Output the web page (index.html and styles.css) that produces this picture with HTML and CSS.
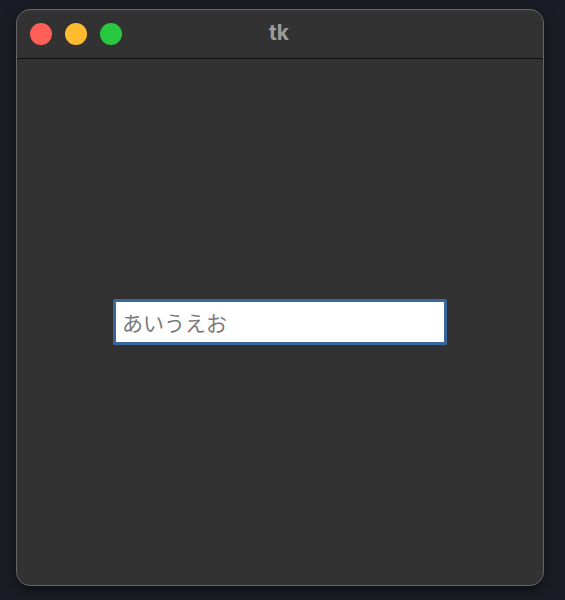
FILE: index.html
```html
<!DOCTYPE html>
<html lang="ja">
<head>
<meta charset="utf-8">
<link rel="stylesheet" href="styles.css">
</head>
<body>
<div class="window">
  <div class="titlebar">
    <div class="lights">
      <span class="light red"></span>
      <span class="light yellow"></span>
      <span class="light green"></span>
    </div>
    <div class="title">tk</div>
  </div>
  <div class="content">
    <input class="entry" type="text" placeholder="あいうえお">
  </div>
</div>
</body>
</html>
```
FILE: styles.css
```css
html, body {
  margin: 0;
  padding: 0;
  width: 565px;
  height: 600px;
  background: #1b1d26;
  overflow: hidden;
}
body {
  padding: 9px 0 0 16px;
  box-sizing: border-box;
  font-family: "Noto Sans", "Noto Sans CJK JP", sans-serif;
}
.window {
  width: 528px;
  height: 577px;
  box-sizing: border-box;
  background: #323232;
  border: 1px solid #666;
  border-radius: 14px;
  overflow: hidden;
  display: flex;
  flex-direction: column;
  box-shadow: 0 4px 12px rgba(0,0,0,0.5);
}
.titlebar {
  height: 48px;
  flex: none;
  border-bottom: 1px solid #0e0e0e;
  position: relative;
  display: flex;
  align-items: center;
}
.lights {
  display: flex;
  gap: 13px;
  padding-left: 13px;
  padding-bottom: 1px;
}
.light {
  width: 22px;
  height: 22px;
  border-radius: 50%;
  display: block;
}
.red { background: #fe5f57; }
.yellow { background: #febc2e; }
.green { background: #28c840; }
.title {
  position: absolute;
  left: 0;
  right: 0;
  top: 0;
  bottom: 0;
  display: flex;
  align-items: center;
  justify-content: center;
  padding-right: 2px;
  padding-bottom: 3px;
  font-family: "Inter", "Noto Sans", sans-serif;
  font-weight: 700;
  font-size: 21px;
  color: #9c9c9c;
}
.content {
  flex: 1;
  display: flex;
  align-items: flex-start;
  padding-top: 240px;
  padding-left: 96px;
}
.entry {
  width: 334px;
  height: 46px;
  box-sizing: border-box;
  border: 3px solid #3a679b;
  border-radius: 2px;
  background: #fff;
  padding: 0 6px 1px;
  font-family: "Noto Sans CJK JP", sans-serif;
  font-size: 21px;
  color: #333;
  outline: none;
  margin: 0;
}
.entry::placeholder {
  color: #7a7a7a;
}
```
